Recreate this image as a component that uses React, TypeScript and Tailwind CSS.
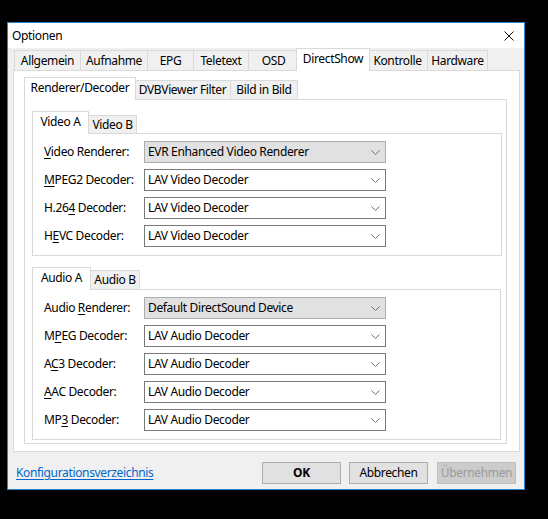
import type { ReactNode } from "react";
import clsx from "clsx";

type TabDef = { label: string; cls: string };

function TabStrip({ tabs, selected, idle }: { tabs: TabDef[]; selected: number; idle: string }) {
  return (
    <div className="flex h-[22px] items-end">
      {tabs.map((t, i) =>
        i === selected ? (
          <div
            key={t.label}
            className={clsx(
              "relative z-10 -mb-px flex h-[23px] shrink-0 items-center justify-center border border-b-0 border-[#d9d9d9] bg-white pb-[2px]",
              t.cls
            )}
          >
            {t.label}
          </div>
        ) : (
          <div
            key={t.label}
            className={clsx(
              "flex shrink-0 items-center justify-center border border-b-0 border-[#d9d9d9] bg-[#f0f0f0]",
              idle,
              t.cls
            )}
          >
            {t.label}
          </div>
        )
      )}
    </div>
  );
}

function Chevron() {
  return (
    <svg width="9" height="5" viewBox="0 0 9 5" className="shrink-0">
      <path d="M0.5 0.5 L4.5 4.5 L8.5 0.5" fill="none" stroke="#707070" strokeWidth="1" />
    </svg>
  );
}

function Row({ label, value, list }: { label: ReactNode; value: string; list?: boolean }) {
  return (
    <div className="flex h-[22px] items-center">
      <div className="w-[100px] shrink-0">{label}</div>
      <div
        className={clsx(
          "flex h-[22px] w-[242px] items-center justify-between border pl-[3px] pr-[5px]",
          list ? "border-[#adadad] bg-[#e1e1e1]" : "border-[#7a7a7a] bg-white"
        )}
      >
        <span>{value}</span>
        <Chevron />
      </div>
    </div>
  );
}

const k = (pre: string, key: string, post: string) => (
  <>
    {pre}
    <u className="underline-offset-2">{key}</u>
    {post}
  </>
);

const mainTabs: TabDef[] = [
  { label: "Allgemein", cls: "ml-px w-[67px]" },
  { label: "Aufnahme", cls: "-ml-px w-[68px]" },
  { label: "EPG", cls: "-ml-px w-[47px]" },
  { label: "Teletext", cls: "-ml-px w-[56px]" },
  { label: "OSD", cls: "-ml-px w-[51px]" },
  { label: "DirectShow", cls: "-ml-[3px] w-[74px]" },
  { label: "Kontrolle", cls: "-ml-[3px] w-[61px]" },
  { label: "Hardware", cls: "-ml-px w-[61px]" },
];

const subTabs: TabDef[] = [
  { label: "Renderer/Decoder", cls: "w-[112px]" },
  { label: "DVBViewer Filter", cls: "-ml-[2px] w-[97px]" },
  { label: "Bild in Bild", cls: "-ml-px w-[68px]" },
];

const videoTabs: TabDef[] = [
  { label: "Video A", cls: "w-[57px]" },
  { label: "Video B", cls: "-ml-px w-[49px]" },
];

const audioTabs: TabDef[] = [
  { label: "Audio A", cls: "w-[59px]" },
  { label: "Audio B", cls: "-ml-px w-[50px]" },
];

export default function App() {
  return (
    <div className="h-[519px] w-[548px] overflow-hidden bg-black pl-[7px] pt-[22px] font-['Noto_Sans',sans-serif] text-[12px] leading-none tracking-[-0.35px] text-black">
      <div className="flex h-[468px] w-[518px] flex-col border border-[#2b86d6] bg-[#f0f0f0]">
        {/* title bar */}
        <div className="flex h-[25px] shrink-0 items-center justify-between bg-white pl-[4px] pr-[10px]">
          <span>Optionen</span>
          <svg width="10" height="10" viewBox="0 0 10 10">
            <path d="M0.5 0.5 L9.5 9.5 M9.5 0.5 L0.5 9.5" stroke="#111" strokeWidth="1" />
          </svg>
        </div>

        {/* client */}
        <div className="flex flex-col pl-[5px] pr-[4px]">
          <TabStrip tabs={mainTabs} selected={5} idle="h-[20px]" />
          <div className="flex h-[382px] flex-col border border-[#d9d9d9] bg-white pb-[7px] pl-[10px] pr-[12px] pt-[6px]">
            <TabStrip tabs={subTabs} selected={0} idle="h-[19px]" />
            <div className="flex h-[345px] flex-col border border-[#d9d9d9] pl-[7px] pt-[11px]">
              <TabStrip tabs={videoTabs} selected={0} idle="h-[18px]" />
              <div className="flex w-[470px] flex-col gap-[6px] border border-[#d9d9d9] pb-[8px] pl-[11px] pt-[7px]">
                <Row label={k("", "V", "ideo Renderer:")} value="EVR Enhanced Video Renderer" list />
                <Row label={k("", "M", "PEG2 Decoder:")} value="LAV Video Decoder" />
                <Row label={k("H.26", "4", " Decoder:")} value="LAV Video Decoder" />
                <Row label={k("H", "E", "VC Decoder:")} value="LAV Video Decoder" />
              </div>

              <div className="mt-[11px]">
                <TabStrip tabs={audioTabs} selected={0} idle="h-[19px]" />
              </div>
              <div className="flex w-[469px] flex-col gap-[6px] border border-[#d9d9d9] pb-[8px] pl-[11px] pt-[7px]">
                <Row label={k("Audio ", "R", "enderer:")} value="Default DirectSound Device" list />
                <Row label={k("M", "P", "EG Decoder:")} value="LAV Audio Decoder" />
                <Row label={k("A", "C", "3 Decoder:")} value="LAV Audio Decoder" />
                <Row label={k("", "A", "AC Decoder:")} value="LAV Audio Decoder" />
                <Row label={k("MP", "3", " Decoder:")} value="LAV Audio Decoder" />
              </div>
            </div>
          </div>
        </div>

        {/* bottom bar */}
        <div className="flex items-center pl-[8px] pr-[8px] pt-[10px]">
          <a href="#" className="text-[#0066cc] underline underline-offset-2">
            Konfigurationsverzeichnis
          </a>
          <div className="ml-auto flex gap-[8px]">
            <button className="h-[22px] w-[79px] border border-[#adadad] bg-[#e1e1e1] font-bold">OK</button>
            <button className="h-[22px] w-[79px] border border-[#adadad] bg-[#e1e1e1]">Abbrechen</button>
            <button className="ml-px h-[22px] w-[79px] border border-[#bfbfbf] bg-[#cccccc] text-[#9a9a9a]">
              Übernehmen
            </button>
          </div>
        </div>
      </div>
    </div>
  );
}
